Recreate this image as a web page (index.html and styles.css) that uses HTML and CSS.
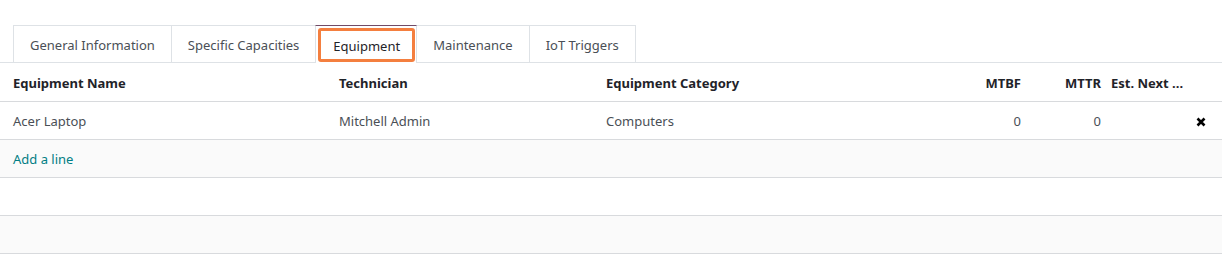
FILE: index.html
```html
<!DOCTYPE html>
<html>
<head>
<meta charset="utf-8">
<link rel="stylesheet" href="styles.css">
</head>
<body>
<div class="page">
  <ul class="tabs">
    <li class="tab">General Information</li>
    <li class="tab">Specific Capacities</li>
    <li class="tab active"><span class="focus">Equipment</span></li>
    <li class="tab">Maintenance</li>
    <li class="tab">IoT Triggers</li>
  </ul>
  <table class="list">
    <colgroup>
      <col class="c-name"><col class="c-tech"><col class="c-cat"><col class="c-mtbf"><col class="c-mttr"><col class="c-est"><col class="c-del">
    </colgroup>
    <thead>
      <tr>
        <th class="first">Equipment Name</th>
        <th>Technician</th>
        <th>Equipment Category</th>
        <th class="num">MTBF</th>
        <th class="num">MTTR</th>
        <th class="ellip">Est. Next ...</th>
        <th></th>
      </tr>
    </thead>
    <tbody>
      <tr>
        <td class="first">Acer Laptop</td>
        <td>Mitchell Admin</td>
        <td>Computers</td>
        <td class="num">0</td>
        <td class="num">0</td>
        <td></td>
        <td class="del"><svg width="10" height="10" viewBox="0 0 10 10"><path d="M1.5 1.5 L8.5 8.5 M8.5 1.5 L1.5 8.5" stroke="#000" stroke-width="2.6" stroke-linecap="butt"/></svg></td>
      </tr>
      <tr class="alt">
        <td class="first add" colspan="7">Add a line</td>
      </tr>
      <tr><td colspan="7"></td></tr>
      <tr class="alt"><td colspan="7"></td></tr>
    </tbody>
  </table>
</div>
</body>
</html>
```
FILE: styles.css
```css
html, body {
  margin: 0;
  padding: 0;
  background: #fff;
}
body {
  font-family: "Noto Sans", "Open Sans", sans-serif;
  font-size: 13px;
  color: #4a4f56;
}
.page {
  width: 1222px;
  padding-top: 25px;
}
.tabs {
  list-style: none;
  margin: 0;
  padding: 0 0 0 13px;
  display: flex;
  border-bottom: 1px solid #dee2e6;
}
.tab {
  height: 37px;
  padding: 2px 16px 0;
  box-sizing: border-box;
  display: flex;
  align-items: center;
  border: 1px solid #dee2e6;
  border-bottom: none;
  margin-left: -1px;
  color: #4a4f56;
}
.tab:first-child {
  margin-left: 0;
}
.tab.active {
  padding: 0;
  border-top-color: #714b67;
  background: #fff;
  margin-bottom: -1px;
  height: 38px;
  position: relative;
  z-index: 1;
}
.focus {
  display: flex;
  align-items: center;
  box-sizing: border-box;
  height: 34px;
  padding: 2px 12px 0;
  margin: 2px 1px 0 2px;
  border: 3px solid #f47f3f;
  border-radius: 3px;
  color: #1f2329;
  align-self: flex-start;
}
.list {
  width: 1222px;
  border-collapse: collapse;
  table-layout: fixed;
}
.c-name { width: 334px; }
.c-tech { width: 267px; }
.c-cat { width: 349px; }
.c-mtbf { width: 76px; }
.c-mttr { width: 80px; }
.c-est { width: 80px; }
.c-del { width: 36px; }
.list tr {
  height: 38px;
  border-bottom: 1px solid #d8dadd;
}
.list tr.alt {
  background: #fafafa;
}
.list th, .list td {
  padding: 2px 5px 0;
  text-align: left;
  white-space: nowrap;
  overflow: hidden;
  vertical-align: middle;
}
.list th {
  font-weight: 700;
  color: #1f2329;
}
.list .first {
  padding-left: 13px;
}
.list .num {
  text-align: right;
}
.list .ellip {
  text-overflow: clip;
}
.list .del {
  text-align: left;
  padding-left: 10px;
  padding-top: 3px;
  line-height: 0;
}
.list .add {
  color: #017e84;
}
```
